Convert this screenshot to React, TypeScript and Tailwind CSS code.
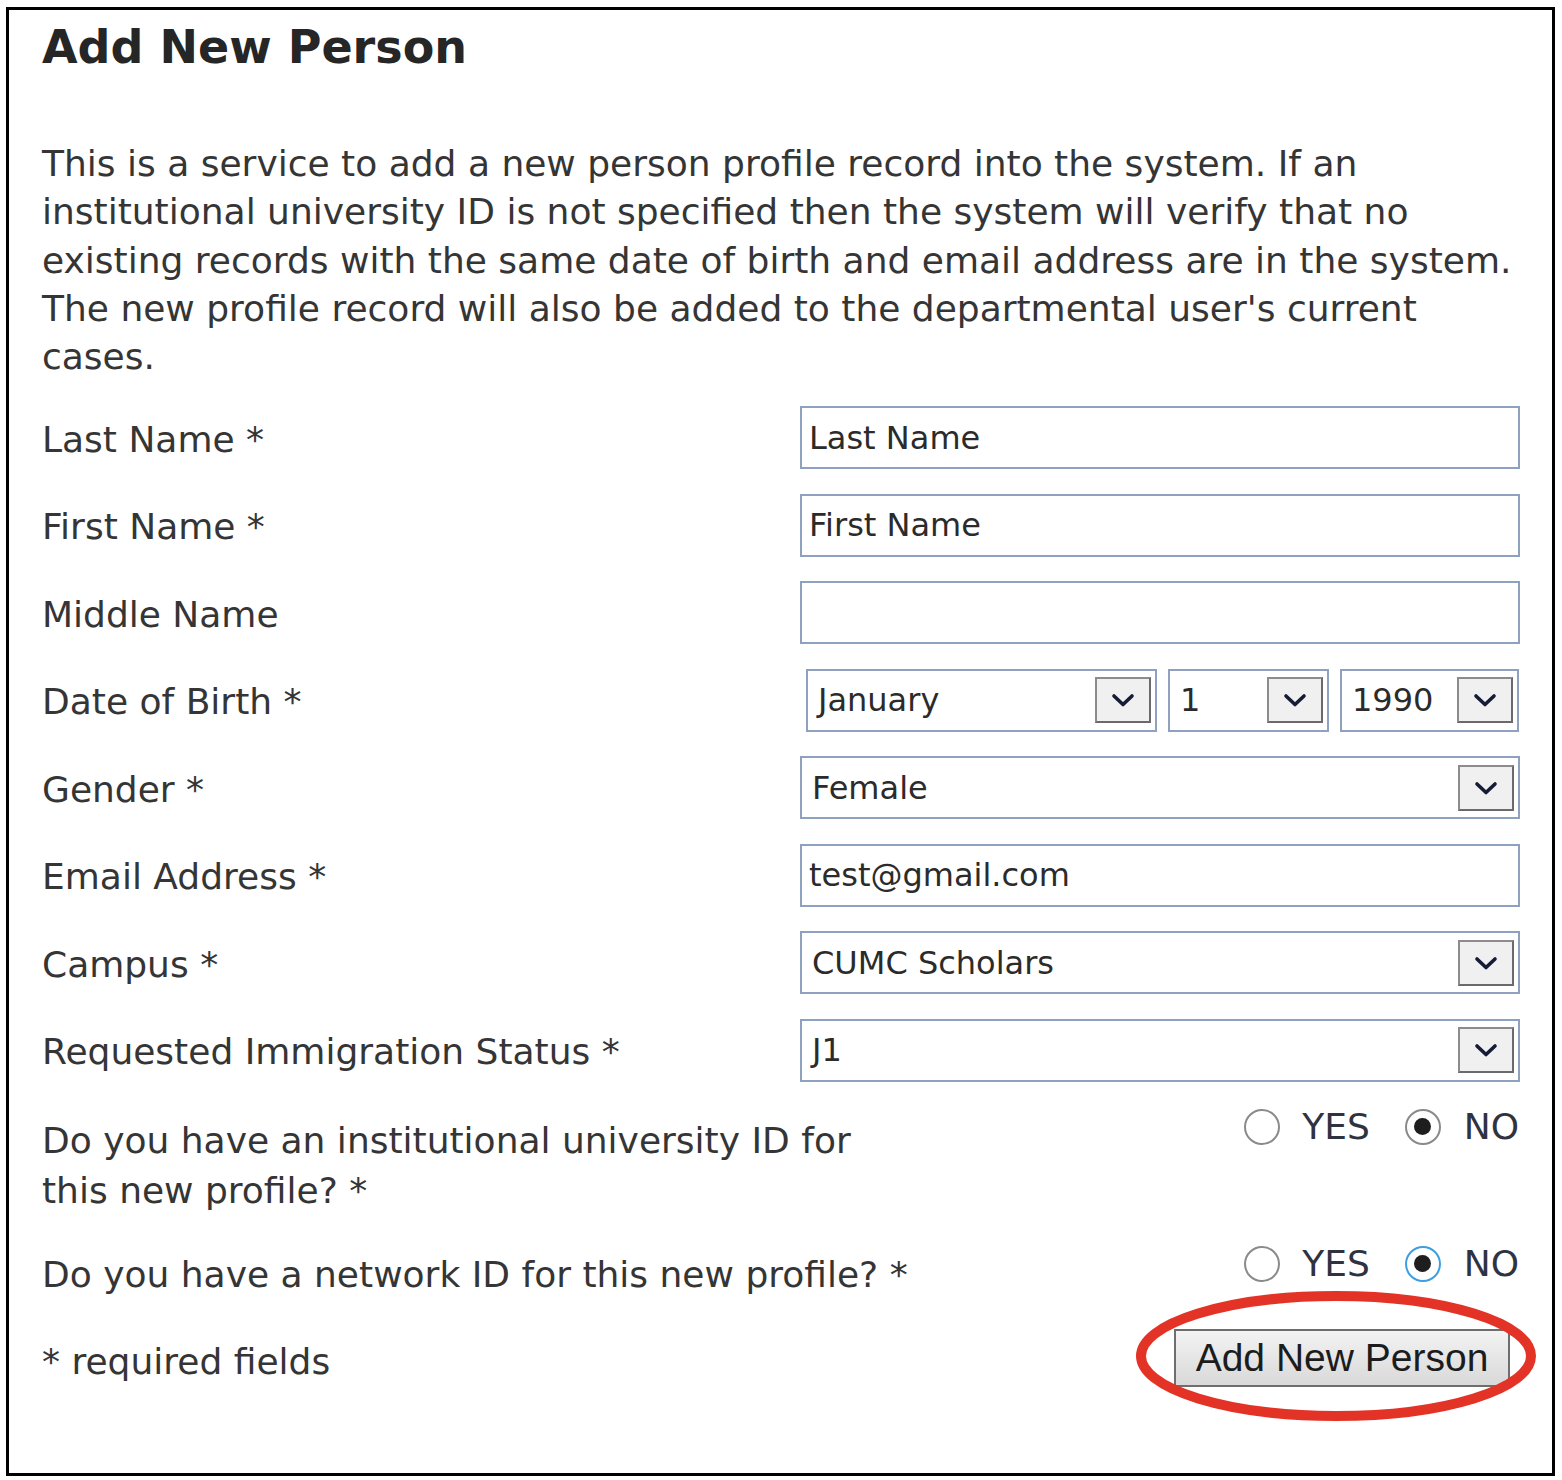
import React from 'react';

const font = { fontFamily: '"DejaVu Sans", Verdana, sans-serif' };

function Chevron() {
  return (
    <svg width="26" height="18" viewBox="0 0 26 18" fill="none">
      <path d="M4 5 L13 13.5 L22 5" stroke="#161b36" strokeWidth="3.6" strokeLinecap="round" strokeLinejoin="round" />
    </svg>
  );
}

function DropButton() {
  return (
    <span className="flex h-[46px] w-[56px] shrink-0 items-center justify-center border-2 border-[#8c8c8c] border-r-[#6a6a6a] border-b-[#6a6a6a] bg-[#f0f0f0]">
      <Chevron />
    </span>
  );
}

function TextBox({ value }: { value: string }) {
  return (
    <div className="flex h-[63px] w-full items-center border-2 border-[#8ea2c0] bg-white px-[7px] text-[32px] text-[#2b2b2b]">
      {value}
    </div>
  );
}

function Select({ value, className = 'w-full' }: { value: string; className?: string }) {
  return (
    <div className={`flex h-[63px] items-center justify-between border-2 border-[#8ea2c0] bg-white pl-[10px] pr-[4px] text-[32px] text-[#2b2b2b] ${className}`}>
      <span>{value}</span>
      <DropButton />
    </div>
  );
}

function Radio({ checked, focused }: { checked?: boolean; focused?: boolean }) {
  return (
    <span
      className={`flex h-[36px] w-[36px] items-center justify-center rounded-full border-2 bg-white ${
        focused ? 'border-[#3d9ee3]' : 'border-[#8a8a8a]'
      }`}
    >
      {checked && <span className="h-[17px] w-[17px] rounded-full bg-[#1e1e1e]" />}
    </span>
  );
}

function YesNo({ focused }: { focused?: boolean }) {
  return (
    <div className="flex h-[40px] items-center text-[36px] leading-none text-[#2f3340]">
      <Radio />
      <span className="ml-[22px]">YES</span>
      <span className="ml-[35px]">
        <Radio checked focused={focused} />
      </span>
      <span className="ml-[23px]">NO</span>
    </div>
  );
}

const rows: { label: string; kind: 'text' | 'select' | 'date'; value?: string }[] = [
  { label: 'Last Name *', kind: 'text', value: 'Last Name' },
  { label: 'First Name *', kind: 'text', value: 'First Name' },
  { label: 'Middle Name', kind: 'text', value: '' },
  { label: 'Date of Birth *', kind: 'date' },
  { label: 'Gender *', kind: 'select', value: 'Female' },
  { label: 'Email Address *', kind: 'text', value: 'test@gmail.com' },
  { label: 'Campus *', kind: 'select', value: 'CUMC Scholars' },
  { label: 'Requested Immigration Status *', kind: 'select', value: 'J1' },
];

const intro = [
  'This is a service to add a new person profile record into the system. If an',
  'institutional university ID is not specified then the system will verify that no',
  'existing records with the same date of birth and email address are in the system.',
  "The new profile record will also be added to the departmental user's current",
  'cases.',
];

export default function App() {
  return (
    <div className="min-h-[1480px] bg-white pl-[6px] pt-[7px]" style={font}>
      <div className="relative h-[1469px] w-[1549px] border-[3px] border-black pl-[33px] pr-[32px] text-[#333]">
        <h1 className="pt-[9px] text-[46px] font-bold leading-[56px] text-[#262626]">Add New Person</h1>

        <div className="mt-[65px] text-[36px] leading-[48.3px] text-[#353535]">
          {intro.map((line) => (
            <div key={line} className="whitespace-nowrap">
              {line}
            </div>
          ))}
        </div>

        <div className="mt-[25px] flex flex-col gap-y-[24.5px]">
          {rows.map((r) => (
            <div key={r.label} className="flex items-center">
              <div className="w-[758px] shrink-0 pt-[4px] text-[36px] text-[#353535]">{r.label}</div>
              <div className="flex-1">
                {r.kind === 'text' && <TextBox value={r.value ?? ''} />}
                {r.kind === 'select' && <Select value={r.value ?? ''} />}
                {r.kind === 'date' && (
                  <div className="ml-[6px] flex gap-[11px]">
                    <Select value="January" className="w-[351px]" />
                    <Select value="1" className="w-[161px]" />
                    <Select value="1990" className="w-[179px]" />
                  </div>
                )}
              </div>
            </div>
          ))}
        </div>

        <div className="mt-[34px] flex items-start justify-between">
          <div className="text-[36px] leading-[50px] text-[#353535]">
            Do you have an institutional university ID for
            <br />
            this new profile? *
          </div>
          <div className="mt-[-9px] pr-[1px]">
            <YesNo />
          </div>
        </div>

        <div className="mt-[34px] flex items-start justify-between">
          <div className="text-[36px] leading-[50px] text-[#353535]">Do you have a network ID for this new profile? *</div>
          <div className="mt-[-6px] pr-[1px]">
            <YesNo focused />
          </div>
        </div>

        <div className="mt-[37px] flex items-start justify-between">
          <div className="text-[36px] leading-[50px] text-[#353535]">* required fields</div>
          <button
            className="mr-[10px] mt-[-8px] h-[58px] w-[336px] border-2 border-[#6e6e6e] bg-gradient-to-b from-[#f3f3f3] to-[#d9d9d9] text-[39px] leading-none text-[#1c1c1c]"
            style={{ fontFamily: '"Liberation Sans", Arial, sans-serif' }}
          >
            Add New Person
          </button>
        </div>

        <svg className="pointer-events-none absolute left-[1124px] top-[1279px]" width="410" height="150" viewBox="0 0 410 150">
          <ellipse cx="203" cy="67" rx="195" ry="60" fill="none" stroke="#e33326" strokeWidth="10" />
        </svg>
      </div>
    </div>
  );
}
